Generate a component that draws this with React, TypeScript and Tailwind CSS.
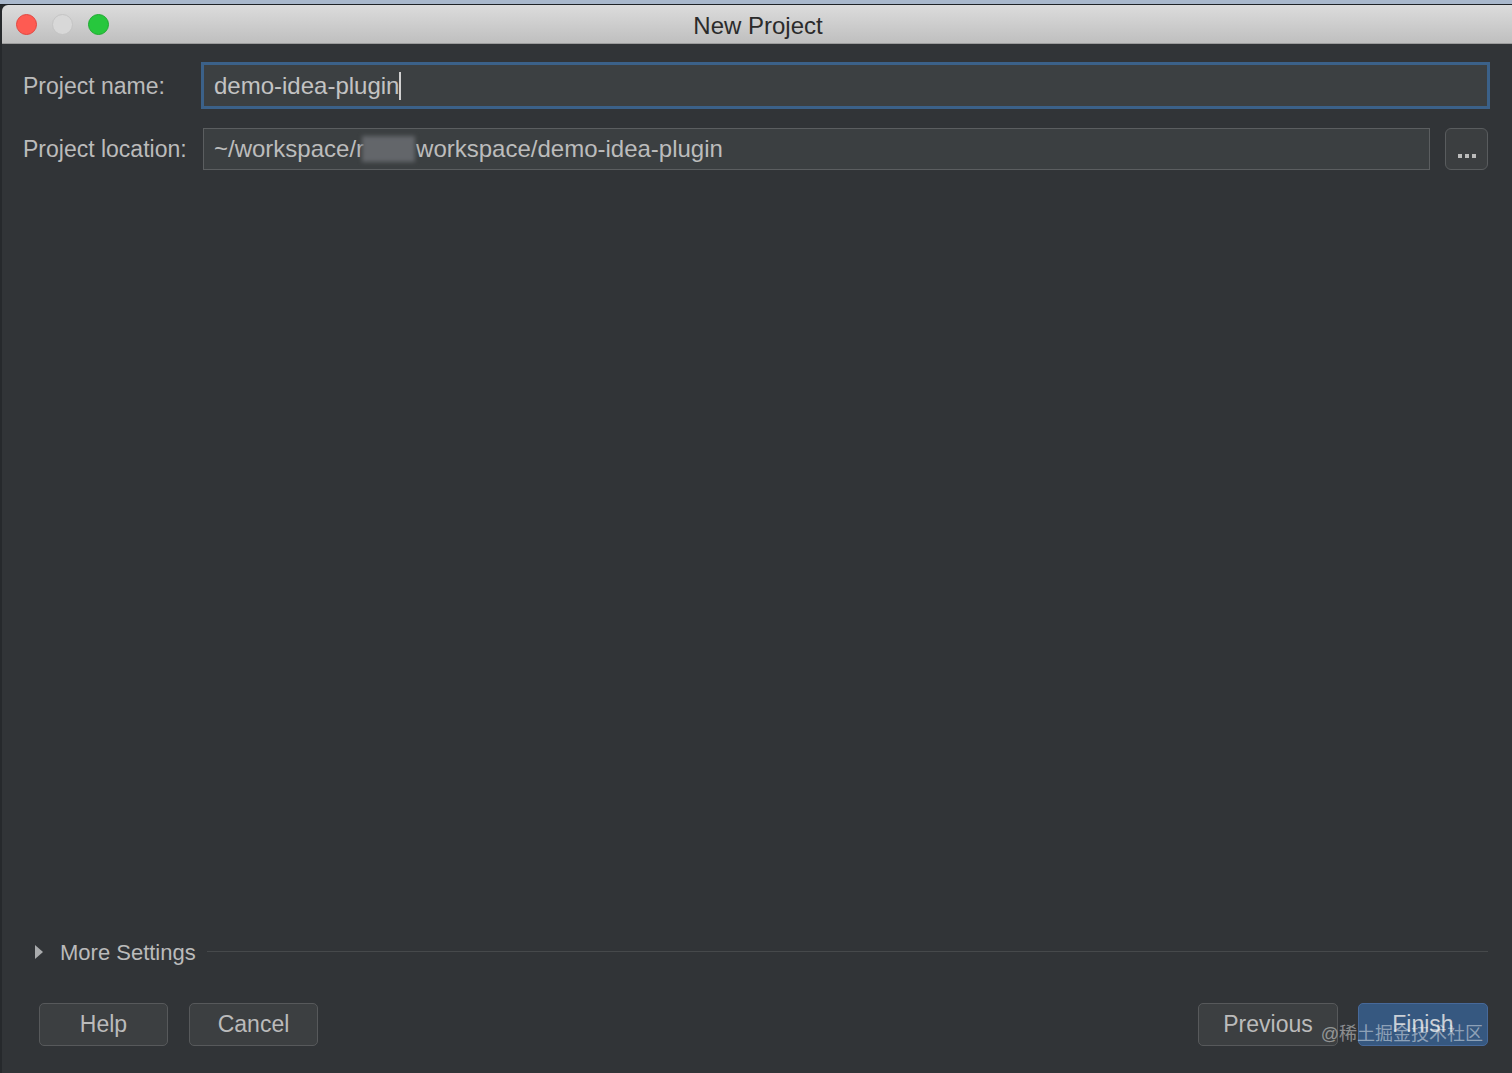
import React from "react";

const font = { fontFamily: '"Liberation Sans", Arial, "Noto Sans CJK SC", sans-serif' };

function Btn({ children, primary = false, w }: { children: React.ReactNode; primary?: boolean; w: string }) {
  return (
    <div
      className={`${w} h-[43px] rounded-[5px] border flex items-center justify-center text-[23px] ${
        primary ? "bg-[#365880] border-[#47699a] text-[#c9cfd6]" : "bg-[#3c3f41] border-[#57595b] text-[#bbbbbb]"
      }`}
    >
      {children}
    </div>
  );
}

export default function App() {
  return (
    <div className="w-[1512px] h-[1073px] bg-[#2e3134] flex flex-col overflow-hidden" style={font}>
      <div className="h-[4px] bg-[#a9b8cc] shrink-0" />
      <div className="h-[1px] bg-[#1f2226] shrink-0" />
      <div className="flex-1 flex flex-col pl-[2px] bg-[#26292c]">
        <div className="flex-1 flex flex-col bg-[#313437] rounded-tl-[6px] overflow-hidden">
          {/* title bar */}
          <div className="relative h-[39px] shrink-0 bg-gradient-to-b from-[#dcdcdc] to-[#bfbfbf] border-b border-[#9c9c9c] flex items-center justify-center">
            <div className="absolute left-[14px] top-[9px] flex gap-[15px]">
              <div className="w-[21px] h-[21px] rounded-full bg-[#fe5b52] border border-[#e2463f]" />
              <div className="w-[21px] h-[21px] rounded-full bg-[#d8d8d8] border border-[#c4c4c4]" />
              <div className="w-[21px] h-[21px] rounded-full bg-[#27c73d] border border-[#1eaa30]" />
            </div>
            <span className="text-[24px] text-[#2b2b2b] ml-[2px] mt-[4px]">New Project</span>
          </div>

          {/* content */}
          <div className="flex-1 flex flex-col pl-[21px] pr-[24px]">
            <div className="flex items-center mt-[18px] h-[47px]">
              <span className="w-[178px] text-[23px] text-[#bbbbbb] mt-[2px]">Project name:</span>
              <div className="flex-1 h-[47px] border-[3px] border-[#3b6189] bg-[#3c4042] flex items-center pl-[10px] mr-[-2px]">
                <span className="text-[24px] text-[#c3c3c3]">demo-idea-plugin</span>
                <span className="w-[2px] h-[28px] bg-[#d0d0d0]" />
              </div>
            </div>

            <div className="flex items-center mt-[19px] h-[42px]">
              <span className="w-[180px] text-[23px] text-[#bbbbbb]">Project location:</span>
              <div className="flex-1 h-[42px] border border-[#5b5e60] bg-[#3b3f41] flex items-center pl-[10px]">
                <span className="text-[24px] text-[#bcbcbc] whitespace-pre">~/workspace/r</span>
                <span className="w-[53px] h-[26px] bg-[#63666a] blur-[2px] -ml-[2px] mr-[1px]" />
                <span className="text-[24px] text-[#bcbcbc] whitespace-pre">workspace/demo-idea-plugin</span>
              </div>
              <div className="ml-[15px] w-[43px] h-[42px] rounded-[6px] border border-[#595c5e] bg-[#3b3e40] flex items-end justify-center pb-[11px] gap-[3px]">
                <span className="w-[4px] h-[4px] bg-[#bbbbbb]" />
                <span className="w-[4px] h-[4px] bg-[#bbbbbb]" />
                <span className="w-[4px] h-[4px] bg-[#bbbbbb]" />
              </div>
            </div>

            <div className="flex-1" />

            <div className="flex items-center h-[30px] pl-[11px]">
              <svg width="10" height="16" viewBox="0 0 10 16" className="shrink-0">
                <path d="M1 1 L9 8 L1 15 Z" fill="#a9abad" />
              </svg>
              <span className="ml-[16px] text-[22px] text-[#bbbbbb]">More Settings</span>
              <div className="flex-1 h-[1px] bg-[#46494b] ml-[11px] mt-[-2px]" />
            </div>

            <div className="relative flex items-center mt-[36px] mb-[27px] pl-[16px]">
              <Btn w="w-[129px]">Help</Btn>
              <div className="w-[21px]" />
              <Btn w="w-[129px]">Cancel</Btn>
              <div className="flex-1" />
              <Btn w="w-[140px]">Previous</Btn>
              <div className="w-[20px]" />
              <Btn primary w="w-[130px]">Finish</Btn>
              <span
                className="absolute right-[5px] top-[18px] text-[18px] text-white/45 whitespace-nowrap"
                style={font}
              >
                @稀土掘金技术社区
              </span>
            </div>
          </div>
        </div>
      </div>
    </div>
  );
}
